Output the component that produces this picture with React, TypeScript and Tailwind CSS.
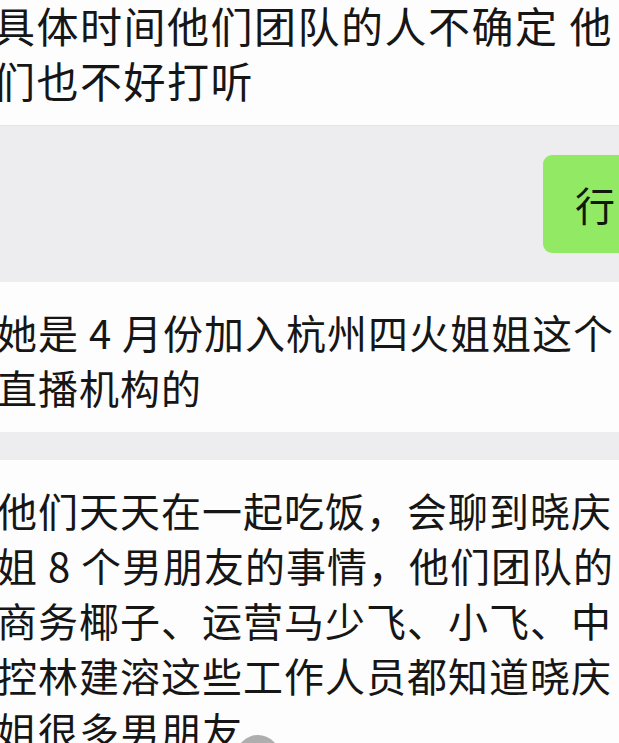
const fontStack = "font-['Noto_Sans_CJK_SC','Noto_Sans',sans-serif]";

type Msg = { lines: string[]; cls: string };

const first: Msg = {
  lines: ["具体时间他们团队的人不确定 他", "们也不好打听"],
  cls: "-ml-[7px] -mt-[3px] text-[42px] tracking-[1.5px]",
};

const second: Msg = {
  lines: ["她是 4 月份加入杭州四火姐姐这个", "直播机构的"],
  cls: "-ml-[3px] text-[40px] tracking-[1px]",
};

const third: Msg = {
  lines: [
    "他们天天在一起吃饭，会聊到晓庆",
    "姐 8 个男朋友的事情，他们团队的",
    "商务椰子、运营马少飞、小飞、中",
    "控林建溶这些工作人员都知道晓庆",
    "姐很多男朋友",
  ],
  cls: "-ml-[3px] text-[40px] tracking-[1px]",
};

const TextBlock = ({ msg }: { msg: Msg }) => (
  <div className={`${msg.cls} leading-[55px] text-[#161616]`}>
    {msg.lines.map((line, i) => (
      <div key={i} className="whitespace-nowrap">
        {line}
      </div>
    ))}
  </div>
);

export default function App() {
  return (
    <div
      className={`relative w-[619px] h-[743px] overflow-hidden bg-[#ededef] ${fontStack}`}
    >
      {/* incoming message, cropped at the top */}
      <section className="h-[125px] overflow-hidden bg-[#fdfdfd]">
        <TextBlock msg={first} />
      </section>

      {/* outgoing reply */}
      <div className="h-[157px] border-t border-[#e4e4e6] flex items-start justify-end pt-[29px]">
        <div className="h-[98px] w-[90px] -mr-[14px] rounded-[9px] bg-[#92e964] flex items-center pl-[32px]">
          <span className="text-[40px] leading-none text-[#0f1a0a]">行</span>
        </div>
      </div>

      <section className="h-[150px] bg-[#fdfdfd] pt-[23px]">
        <TextBlock msg={second} />
      </section>

      <div className="h-[28px]" />

      <section className="h-[300px] bg-[#fdfdfd] pt-[23px]">
        <TextBlock msg={third} />
      </section>

      {/* floating button peeking in at the bottom */}
      <div className="absolute left-[236px] top-[735px] w-[44px] h-[44px] rounded-full bg-[#9a9a9a] opacity-80" />
    </div>
  );
}
